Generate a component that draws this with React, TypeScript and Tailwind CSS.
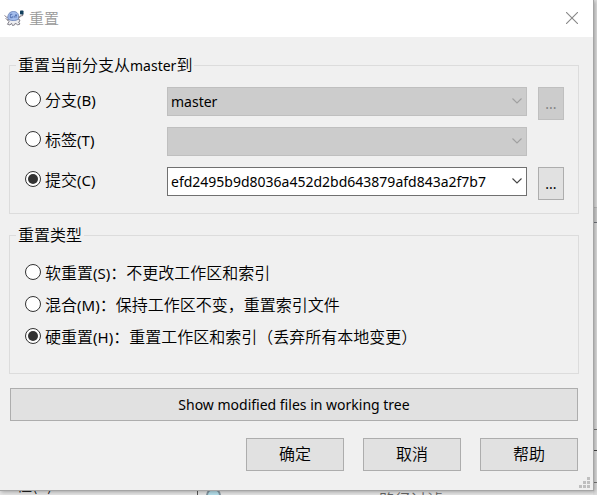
import type { ReactNode } from "react";

const CJK = "font-['Noto_Sans_CJK_SC',sans-serif]";
const LATIN = "font-['Noto_Sans',sans-serif] text-[14px] font-normal";

function Latin({ children }: { children: ReactNode }) {
  return <span className={LATIN}>{children}</span>;
}

function Key({ children }: { children: ReactNode }) {
  return <span className="font-['Noto_Sans',sans-serif] text-[15px] font-normal">({children})</span>;
}

function TurtleIcon() {
  return (
    <svg viewBox="0 0 20 18" className="h-[18px] w-5 shrink-0" aria-hidden="true">
      <path d="M0.500 6.500 L3 8.500 L4.500 8 M1.500 9.500 L4 11" stroke="#8a828c" strokeWidth="1" fill="none" />
      <path d="M3.500 11 L6 10.500 H13 L15 10 L16 12 L14.500 13 L16 15 L13.500 16 L11.500 14 L10.500 16 L8.500 16.500 L7.500 14.300 L6 16 L3.500 15.300 L5 12.500 Z" fill="#ededf0" stroke="#77757f" strokeWidth="0.9" />
      <path d="M4 10 C3.200 5 6 2.500 9.500 2.500 C13 2.500 15.500 5 14.500 10 C12 12 6.500 12 4 10 Z" fill="#a3bcec" stroke="#6d84b8" strokeWidth="0.9" />
      <path d="M8.300 5.300 H6.300 V8.700 H8.300 V7.200 M10.200 6.800 V8.700 M12 5 V8.700 M11.300 6.500 H12.800" fill="none" stroke="#4160a2" strokeWidth="0.8" />
      <path d="M14.500 9 L16.500 7 L18.500 6.500 L19 4.500" stroke="#88838c" strokeWidth="1.200" fill="none" />
      <rect x="16" y="1.500" width="3.500" height="4" rx="0.800" fill="#123f5d" />
    </svg>
  );
}

type RadioProps = { name: string; id: string; checked?: boolean; children: ReactNode };

function Radio({ name, id, checked, children }: RadioProps) {
  return (
    <label htmlFor={id} className="flex h-6 items-center gap-1 whitespace-nowrap leading-[22px]">
      <input
        id={id}
        type="radio"
        name={name}
        defaultChecked={checked}
        className="grid size-4 shrink-0 appearance-none place-items-center rounded-full border border-[#333] bg-white before:size-[10px] before:rounded-full checked:before:bg-[#333]"
      />
      <span>{children}</span>
    </label>
  );
}

function Combo({ label, value, disabled }: { label: string; value: string; disabled?: boolean }) {
  return (
    <div className="relative min-w-0 flex-1">
      <select
        aria-label={label}
        disabled={disabled}
        defaultValue={value}
        className={`block h-[29px] w-full appearance-none border border-[#707070] bg-white pl-[3px] pr-5 text-black opacity-100 outline-none disabled:border-[#bfbfbf] disabled:bg-[#ccc] ${LATIN}`}
      >
        <option value={value}>{value}</option>
      </select>
      <svg viewBox="0 0 10 6" className={`pointer-events-none absolute right-[5px] top-[11px] h-[6px] w-[10px] ${disabled ? "text-[#a0a0a0]" : "text-[#444]"}`} aria-hidden="true">
        <path d="M0.500 0.500 L5 5 L9.500 0.500" fill="none" stroke="currentColor" strokeWidth="1.100" />
      </svg>
    </div>
  );
}

function Browse({ label, disabled }: { label: string; disabled?: boolean }) {
  return (
    <button
      aria-label={label}
      disabled={disabled}
      className={`h-[33px] w-[26px] shrink-0 border border-[#adadad] bg-[#e1e1e1] disabled:border-[#bfbfbf] disabled:bg-[#ccc] disabled:text-[#838383] ${LATIN}`}
    >
      ...
    </button>
  );
}

function Group({ title, children }: { title: ReactNode; children: ReactNode }) {
  return (
    <fieldset className="min-w-0 border border-[#dcdcdc] px-[6px]">
      <legend className="h-5 px-[2px] leading-[18px]">{title}</legend>
      {children}
    </fieldset>
  );
}

function Backdrop() {
  return (
    <div aria-hidden="true" className="absolute inset-0 overflow-hidden bg-[#e6e6e6]">
      <div className="absolute right-0 top-0 h-full w-1 bg-[#dedede]">
        <div className="absolute top-[207px] h-[16px] w-full border-b border-t border-b-[#70747c] border-t-[#bbb] bg-[#d0d0d0]" />
        <div className="absolute bottom-[65px] h-px w-full bg-[#777]" />
        <div className="absolute bottom-[44px] h-px w-full bg-[#444]" />
        <div className="absolute bottom-[12px] h-px w-full bg-[#777]" />
      </div>
      <span className="absolute bottom-px left-0 leading-5 text-[#222]">工程(R)</span>
      <div className="absolute bottom-0 left-[197px] h-5 w-px bg-[#555]" />
      <div className="absolute -bottom-2 left-[206px] size-[15px] rounded-full border-2 border-[#8295a0] bg-[#b5dfeb]" />
      <span className="absolute -bottom-[14px] left-[379px] leading-5 text-[#666]">路径过滤</span>
    </div>
  );
}

export default function App() {
  return (
    <div className={`relative min-h-screen overflow-hidden pb-1 pr-[3px] text-[16px] font-[350] text-black ${CJK}`}>
      <Backdrop />
      <main className="relative border-b border-r border-[#a5a5a5] bg-[#f0f0f0] shadow-[1px_1px_4px_rgba(0,0,0,0.3)]">
        <header className="flex h-[37px] items-center bg-white pb-px pl-1 pr-[15px]">
          <TurtleIcon />
          <h1 className="ml-[5px] flex-1 text-[15px] font-[350] leading-5 text-[#999]">重置</h1>
          <button aria-label="关闭">
            <svg viewBox="0 0 12 12" className="size-3" aria-hidden="true">
              <path d="M0 0 L12 12 M12 0 L0 12" stroke="#888" strokeWidth="1.100" />
            </svg>
          </button>
        </header>

        <form className="flex flex-col pb-[19px] pl-[9px] pr-[14px] pt-[18px]" onSubmit={(e) => e.preventDefault()}>
          <Group title={<>重置当前分支从<Latin>master</Latin>到</>}>
            <div className="pb-[6px] pl-[9px] pr-2 pt-3">
              <div className="flex h-10 items-start">
                <div className="w-[142px] shrink-0">
                  <Radio name="target" id="branch">分支<Key>B</Key></Radio>
                </div>
                <div className="flex min-w-0 flex-1 gap-[11px]">
                  <Combo label="分支" value="master" disabled />
                  <Browse label="浏览分支" disabled />
                </div>
              </div>
              <div className="flex h-10 items-start">
                <div className="w-[142px] shrink-0">
                  <Radio name="target" id="tag">标签<Key>T</Key></Radio>
                </div>
                <div className="flex min-w-0 flex-1 pr-[37px]">
                  <Combo label="标签" value="" disabled />
                </div>
              </div>
              <div className="flex h-10 items-start">
                <div className="w-[142px] shrink-0">
                  <Radio name="target" id="commit" checked>提交<Key>C</Key></Radio>
                </div>
                <div className="flex min-w-0 flex-1 gap-[11px]">
                  <Combo label="提交" value="efd2495b9d8036a452d2bd643879afd843a2f7b7" />
                  <Browse label="浏览提交" />
                </div>
              </div>
            </div>
          </Group>

          <div className="mt-[11px]">
            <Group title="重置类型">
              <div className="flex flex-col gap-2 pb-[25px] pl-[9px] pt-[15px]">
                <Radio name="type" id="soft">软重置<Key>S</Key>：不更改工作区和索引</Radio>
                <Radio name="type" id="mixed">混合<Key>M</Key>：保持工作区不变，重置索引文件</Radio>
                <Radio name="type" id="hard" checked>硬重置<Key>H</Key>：重置工作区和索引（丢弃所有本地变更）</Radio>
              </div>
            </Group>
          </div>

          <button type="button" className={`mx-px mt-[14px] h-[33px] border border-[#adadad] bg-[#e1e1e1] ${LATIN}`}>
            Show modified files in working tree
          </button>

          <div className="mr-px mt-[17px] flex justify-end gap-[19px]">
            <button className="h-[33px] w-[98px] border border-[#adadad] bg-[#e1e1e1] pb-[3px]">确定</button>
            <button type="button" className="h-[33px] w-[98px] border border-[#adadad] bg-[#e1e1e1] pb-[3px]">取消</button>
            <button type="button" className="h-[33px] w-[98px] border border-[#adadad] bg-[#e1e1e1] pb-[3px]">帮助</button>
          </div>
        </form>

        <svg viewBox="0 0 11 11" className="absolute bottom-[2px] right-[3px] size-[11px]" aria-hidden="true" fill="#bfbfbf">
          <rect x="8" y="0" width="3" height="3" />
          <rect x="4" y="4" width="3" height="3" />
          <rect x="8" y="4" width="3" height="3" />
          <rect x="0" y="8" width="3" height="3" />
          <rect x="4" y="8" width="3" height="3" />
          <rect x="8" y="8" width="3" height="3" />
        </svg>
      </main>
    </div>
  );
}
